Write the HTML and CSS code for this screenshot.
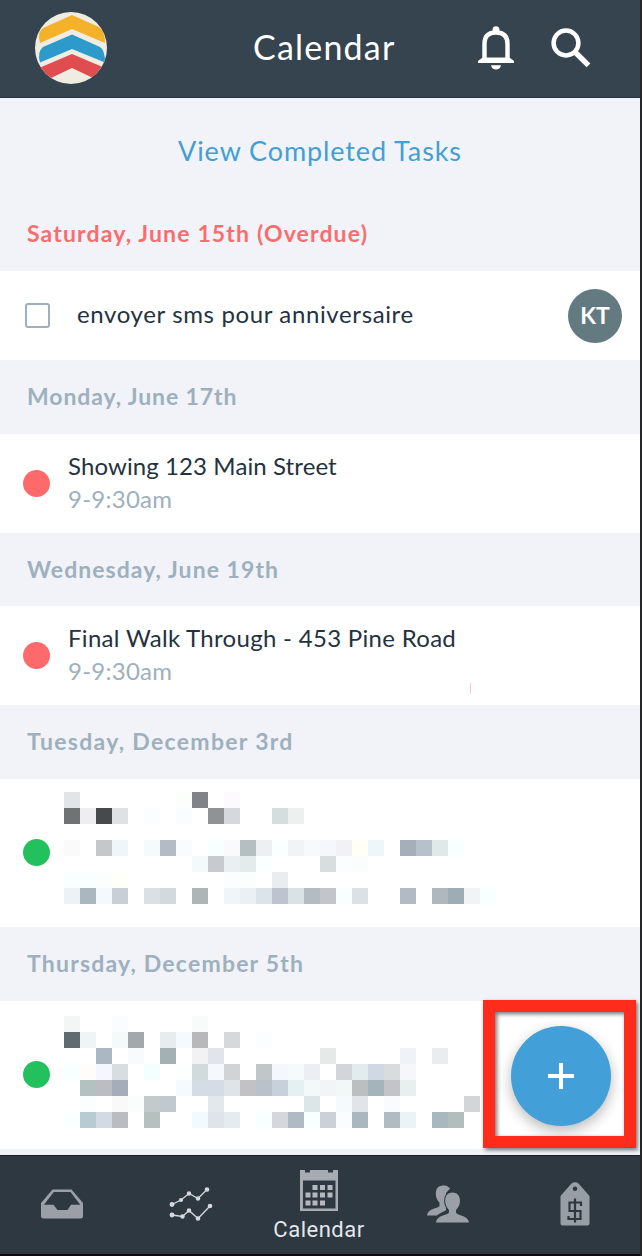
FILE: index.html
```html
<!DOCTYPE html>
<html lang="en">
<head>
    <meta charset="UTF-8">
    <meta name="viewport" content="width=device-width, initial-scale=1.0">
    <title>Calendar</title>
    <link rel="stylesheet" href="styles.css">
</head>
<body>
    <div class="app">
        <header class="topbar">
            <svg class="logo" viewBox="0 0 72 72">
                <defs><clipPath id="logo-clip"><circle cx="36" cy="36" r="36"/></clipPath></defs>
                <circle cx="36" cy="36" r="36" fill="#efede2"/>
                <g clip-path="url(#logo-clip)">
                    <path d="M37 3 L64 15 Q70 19 70 31 L37 17 L5 31 Q2 20 8 16 Z" fill="#f3b229"/>
                    <path d="M37 22.500 L65 35 Q70 38 70 50.500 L37 37 L5 50.500 Q2 40 8 35 Z" fill="#2c9aca"/>
                    <path d="M37 42 L70 56 L58 66 L37 56 L16 66 L4 56 Z" fill="#df4d50"/>
                </g>
            </svg>
            <h1 class="title">Calendar</h1>
            <svg class="bell" viewBox="0 0 36 44">
                <path d="M6.500 34 V18 C6.500 10 11 6.500 18 6.500 S29.500 10 29.500 18 V34" fill="none" stroke="#fff" stroke-width="4.400"/>
                <circle cx="18" cy="3.700" r="3.500" fill="#fff"/>
                <path d="M0 37 V35 L4.500 31.500 H31.500 L36 35 V37 Z" fill="#fff"/>
                <path d="M13 39.200 H23 Q22 43.500 18 43.500 T13 39.200 Z" fill="#fff"/>
            </svg>
            <svg class="search" viewBox="0 0 40 40">
                <circle cx="15" cy="15" r="12.400" fill="none" stroke="#fff" stroke-width="4.500"/>
                <path d="M24.500 24.500 L37.500 37.300" stroke="#fff" stroke-width="5.400"/>
            </svg>
        </header>

        <main class="content">
            <a class="completed" href="#"><span class="completed-text">View Completed Tasks</span></a>

            <h2 class="date overdue">Saturday, June 15th (Overdue)</h2>
            <div class="row task">
                <span class="checkbox"></span>
                <span class="task-name">envoyer sms pour anniversaire</span>
                <span class="avatar">KT</span>
            </div>

            <h2 class="date monday">Monday, June 17th</h2>
            <div class="row event">
                <span class="dot"></span>
                <div class="event-text">
                    <div class="event-name showing">Showing 123 Main Street</div>
                    <div class="event-time">9-9:30am</div>
                </div>
            </div>

            <h2 class="date wednesday">Wednesday, June 19th</h2>
            <div class="row event">
                <span class="dot"></span>
                <div class="event-text">
                    <div class="event-name walk">Final Walk Through - 453 Pine Road</div>
                    <div class="event-time">9-9:30am</div>
                </div>
                <span class="tick"></span>
            </div>

            <h2 class="date tuesday">Tuesday, December 3rd</h2>
            <div class="row event tall">
                <span class="dot green"></span>
                <div class="mosaic" id="mosaic1"></div>
            </div>

            <h2 class="date thursday">Thursday, December 5th</h2>
            <div class="row event tall">
                <span class="dot green"></span>
                <div class="mosaic second" id="mosaic2"></div>
            </div>
        </main>

        <nav class="tabs">
            <a class="tab" href="#">
                <svg class="icon-inbox" viewBox="0 0 42 30">
                    <path d="M11.500 .5 H30.500 L42 14 V27 Q42 29.500 39.500 29.500 H2.500 Q0 29.500 0 27 V14 Z M12.800 3 L3 15.800 H12.500 L16.500 21 H26.500 L30 15.800 H39.200 L29.500 3 Z" fill="#9b9fa7" fill-rule="evenodd"/>
                </svg>
            </a>
            <a class="tab" href="#">
                <svg class="icon-chart" viewBox="0 0 44 34">
                    <g fill="none" stroke="#d5d9df" stroke-width="1.300">
                        <path d="M3 17.500 L12 13 L20 6.500 L29 11.500 L38 2.500"/>
                        <path d="M3 28 L13.500 29.500 L20 23.500 L29 31.500 L41 19"/>
                    </g>
                    <g fill="#d5d9df">
                        <circle cx="3" cy="17.500" r="2.400"/><circle cx="12" cy="13" r="2.100"/><circle cx="20" cy="6.500" r="2.200"/><circle cx="29" cy="11.500" r="2.200"/><circle cx="38" cy="2.500" r="2.300"/>
                        <circle cx="3" cy="28" r="2.400"/><circle cx="13.500" cy="29.500" r="2.200"/><circle cx="20" cy="23.500" r="2.200"/><circle cx="29" cy="31.500" r="2.300"/><circle cx="41" cy="19" r="2.300"/>
                    </g>
                </svg>
            </a>
            <a class="tab active" href="#">
                <svg class="icon-calendar" viewBox="0 0 38 41">
                    <path d="M0 0 H5 V2.500 H10 V0 H28 V2.500 H33 V0 H38 V41 H0 Z M3 10.500 V38.500 H35.500 V10.500 Z" fill="#a7abb2" fill-rule="evenodd"/>
                    <path d="M12.500 15h5v5h-5z M20 15h5v5h-5z M27.500 15h5v5h-5z M5.500 22.500h5v5h-5z M12.500 22.500h5v5h-5z M20 22.500h5v5h-5z M27.500 22.500h5v5h-5z M5.500 30.500h5v5h-5z M12.500 30.500h5v5h-5z M20 30.500h5v5h-5z" fill="#b5b8bd"/>
                </svg>
                <span class="tab-label">Calendar</span>
            </a>
            <a class="tab" href="#">
                <svg class="icon-people" viewBox="0 0 42 38">
                    <path d="M16 .5 C11 .5 8.800 4 8.800 9 C8.800 13 10.500 15.500 12.500 17.500 V21 C10.500 24 1 23 0 30.500 H10 C13 27.500 17 27 19 25 V8 L23 3.500 C21 1 19 .5 16 .5 Z" fill="#9b9fa7"/>
                    <path class="person-front" d="M25.500 7.500 C20.500 7.500 18.200 11 18.200 16 C18.200 20 20 23 22 25 V27.500 C20.500 30.500 9.500 30 9 37.500 H42 C41 30 30.500 31 29 27.500 V25 C31 23 33 20 33 16 C33 11 30.500 7.500 25.500 7.500 Z"/>
                </svg>
            </a>
            <a class="tab" href="#">
                <svg class="icon-tag" viewBox="0 0 30 44">
                    <path d="M11.500 1.500 Q15 -1 18.500 1.500 L29.500 14 V41.500 Q29.500 43.500 27.500 43.500 H2.500 Q.5 43.500 .5 41.500 V14 Z M15 4.500 A2.300 2.300 0 1 0 15 9.100 A2.300 2.300 0 1 0 15 4.500 Z" fill="#989ea5" fill-rule="evenodd"/>
                    <path d="M21 24 V20.500 H9.500 V29 H20.500 V37 H8.500 V34 M15 16.500 V40.500" fill="none" stroke="#2e3840" stroke-width="2.200"/>
                </svg>
            </a>
        </nav>

        <button class="fab" aria-label="Add"></button>
        <div class="highlight"></div>
    </div>

    <script>
        // each row lists column:color pairs, 16px cells
        const mosaics = {
            mosaic1: [
                '0:e1e5e8 7:fcfefb 8:828388 10:fcfafd',
                '0:6f7373 1:eeeef0 2:48494d 3:dee2e3 5:fafefe 7:f9fdff 9:8f9395 10:d5d8dc 13:d5dede 14:ecf1f0',
                '',
                '0:fafafb 2:c5c8cb 3:eff6f9 5:f5fafc 6:b3bbc4 7:fafbfd 9:f8ffff 10:fafafd 11:b5bec0 12:ecf0f2 13:faffff 14:f2f3f6 15:f7fafc 16:f4f7fb 17:f2f2f6 18:fffff6 19:edf6f9 21:a5afba 22:b7c1cb 23:e0e9e9 24:f8ffff',
                '8:f3faf9 9:c7cbd0 10:eaeff2 11:e3ebed 12:faffff 16:d8dde0 17:fafeff 18:fbfdfc',
                '0:f9ffff 1:f9ffff 2:fafffe 3:fffffa 10:fafefe 11:fafffe 13:e9edf0',
                '0:ecf2f6 1:abb7bf 2:f3f9fd 3:c8cfd7 5:dbe0e4 6:d3dadd 8:adb5b7 10:eff5f9 11:ebf0f4 12:dbe3eb 13:bdc4cf 14:d9e2e5 15:b3bcc3 16:c3c5ca 17:f9ffff 18:dbe1e5 21:b2bbc3 23:afb8bf 24:9eacb6 25:f2f3f5 26:f8ffff'
            ],
            mosaic2: [
                '0:f4f6f6 3:fbfcff 8:f9fbfa',
                '0:5f6a71 1:eff4f6 3:f3faf9 4:a3a8ad 6:e7ecef 7:f4fafd 8:b8b7ba 10:d5d9da 12:fafefe',
                '2:abb7c2 4:f7fbfe 6:a3b1b4 8:f2f2f4 9:e1e4ea 16:e5eae9 21:eff3f8 23:ebecee',
                '0:f8ffff 1:fffdf9 2:f4f8fe 3:d8dde0 5:f3ffff 7:fbfffe 8:d1dbdb 9:f5f8fd 10:d2d3d7 12:c1c6c9 13:f4f8fd 14:f5fafc 15:ebeff3 17:d2d5d9 18:e2ebee 19:d0d9e3 20:d9dcdd 21:f6f7fa',
                '1:b3c1c1 2:bbbdc2 3:a5adba 7:f4fafe 8:d4dce5 9:d5dce5 10:dfe4e8 11:c2c2c6 12:b9c1ca 13:c7d1dc 14:e5f0f2 15:f3f8f9 16:f2f5f7 17:f2f7f8 18:bcbfc2 19:a3b5ba 20:c3c4c9 21:e8efef',
                '1:fbfeff 3:f8f9f8 4:fbfdfc 5:c2cacc 6:c1c9d0 9:e2e8eb 15:dce6e9 17:f5fafc 18:e1e4e8 20:fafbff 25:d2d6d9',
                '0:faffff 1:b8cad2 2:d2dbe4 3:b9bdc1 5:b6c0bf 8:f1fbff 9:dee4e9 10:e4ecef 12:f8ffff 13:d4d8dc 14:b0bac5 15:f7ffff 16:cbd0d9 17:fafcff 18:aab7be 20:b1bcc2 21:eaf4f7 23:a9b7be 24:b2bdbe'
            ]
        };

        for (const id in mosaics) {
            const box = document.getElementById(id);
            mosaics[id].forEach((line, row) => {
                line.split(' ').filter(Boolean).forEach(item => {
                    const [col, color] = item.split(':');
                    const cell = document.createElement('span');
                    cell.style.gridColumn = Number(col) + 1;
                    cell.style.gridRow = row + 1;
                    cell.style.background = '#' + color;
                    box.appendChild(cell);
                });
            });
        }
    </script>
</body>
</html>
```
FILE: styles.css
```css
body {
    margin: 0;
    background: #252628;
    font-family: Lato, "Open Sans", sans-serif;
    overflow: hidden;
}
.app {
    position: relative;
    display: flex;
    flex-direction: column;
    width: 640px;
    height: 1256px;
    background: #f1f3f8;
}
.topbar {
    display: grid;
    grid-template-columns: 72px 1fr 36px 40px;
    align-items: center;
    height: 98px;
    padding: 0 49px 2px 35px;
    box-sizing: border-box;
    background: #36444f;
    border-bottom: 1px solid #273440;
}
.logo {
    width: 72px;
    height: 72px;
}
.title {
    margin: -1px 0 0 146px;
    font-size: 34px;
    font-weight: 400;
    line-height: 40px;
    letter-spacing: 1.2px;
    color: #fff;
    white-space: nowrap;
}
.bell {
    width: 36px;
    height: 44px;
    margin-left: -37px;
}
.search {
    width: 40px;
    height: 40px;
}
.content {
    display: flex;
    flex-direction: column;
    height: 1057px;
}
.completed {
    display: flex;
    justify-content: center;
    align-items: center;
    height: 99px;
    padding-top: 6px;
    box-sizing: border-box;
    color: #429fd5;
    font-size: 27px;
    letter-spacing: 0.9px;
    text-decoration: none;
}
.date {
    display: flex;
    align-items: center;
    height: 74px;
    margin: 0;
    padding: 0 0 2px 27px;
    box-sizing: border-box;
    color: #9eb0bd;
    font-size: 23px;
    font-weight: 700;
}
.overdue {
    color: #f96d6e;
    letter-spacing: 1.15px;
}
.monday {
    letter-spacing: 0.9px;
}
.wednesday {
    height: 73px;
    letter-spacing: 1.05px;
}
.tuesday {
    letter-spacing: 1.3px;
}
.thursday {
    letter-spacing: 1.2px;
}
.row {
    display: flex;
    align-items: center;
    box-sizing: border-box;
    background: #fff;
    color: #24323f;
    font-size: 24px;
}
.task {
    height: 89px;
    padding: 0 18px 0 25px;
}
.checkbox {
    width: 25px;
    height: 25px;
    border: 2px solid #9eb0bd;
    border-radius: 3px;
    box-sizing: border-box;
}
.task-name {
    flex: 1;
    margin: -5px 0 0 27px;
    letter-spacing: 0.63px;
}
.avatar {
    display: flex;
    justify-content: center;
    align-items: center;
    width: 54px;
    height: 54px;
    padding-bottom: 1px;
    box-sizing: border-box;
    border-radius: 50%;
    background: #637b80;
    color: #fff;
    font-size: 23px;
    font-weight: 700;
}
.event {
    height: 99px;
    padding-left: 23px;
}
.dot {
    width: 27px;
    height: 27px;
    border-radius: 50%;
    background: #fe6a6b;
}
.dot.green {
    background: #23c15d;
}
.event-text {
    width: 400px;
    margin: -4px 0 0 18px;
    line-height: 33px;
    white-space: nowrap;
}
.showing {
    letter-spacing: 0.1px;
}
.walk {
    letter-spacing: 0.3px;
}
.event-time {
    color: #9eb0bd;
    letter-spacing: 0.25px;
}
.tick {
    width: 1px;
    height: 11px;
    margin: 65px 0 0 2px;
    background: #fbc9d2;
}
.tall {
    height: 148px;
    padding-bottom: 2px;
}
.mosaic {
    display: grid;
    grid-template-columns: repeat(28, 16px);
    grid-template-rows: repeat(7, 16px);
    margin: -8px 0 0 14px;
}
.mosaic.second {
    margin-top: -4px;
}
.tabs {
    display: grid;
    grid-template-columns: repeat(5, 128px);
    height: 101px;
    box-sizing: border-box;
    background: #2e3840;
    border-top: 1px solid #13222a;
    border-bottom: 2px solid #080a0c;
}
.tab {
    display: flex;
    flex-direction: column;
    align-items: center;
    justify-content: center;
    padding-bottom: 2px;
    color: #e3e7ee;
    text-decoration: none;
}
.icon-inbox {
    width: 42px;
    height: 30px;
    margin-left: -4px;
}
.icon-chart {
    width: 44px;
    height: 34px;
    margin-left: -3px;
}
.icon-calendar {
    width: 38px;
    height: 41px;
}
.active {
    padding: 2px 2px 0 0;
}
.tab-label {
    font-family: Roboto, sans-serif;
    font-size: 22px;
    line-height: 26px;
    margin-top: 6px;
    letter-spacing: 0.5px;
}
.icon-people {
    width: 42px;
    height: 38px;
}
.person-front {
    fill: #9b9fa7;
    stroke: #2e3840;
    stroke-width: 2px;
    paint-order: stroke;
}
.icon-tag {
    width: 30px;
    height: 44px;
    margin-left: -3px;
}
.fab {
    position: absolute;
    left: 511px;
    top: 1026px;
    width: 100px;
    height: 100px;
    padding: 0;
    border: none;
    border-radius: 50%;
    background:
        linear-gradient(#fff, #fff) center / 26px 4px no-repeat,
        linear-gradient(#fff, #fff) center / 4px 26px no-repeat,
        #429fd8;
    box-shadow: 0 5px 14px rgba(0, 0, 0, 0.28);
}
.highlight {
    position: absolute;
    left: 483px;
    top: 1000px;
    width: 153px;
    height: 148px;
    box-sizing: border-box;
    border: 12px solid #ff2b1b;
    box-shadow: 2px 2px 4px rgba(0, 0, 0, 0.55), inset 2px 2px 4px rgba(0, 0, 0, 0.55);
}
```
